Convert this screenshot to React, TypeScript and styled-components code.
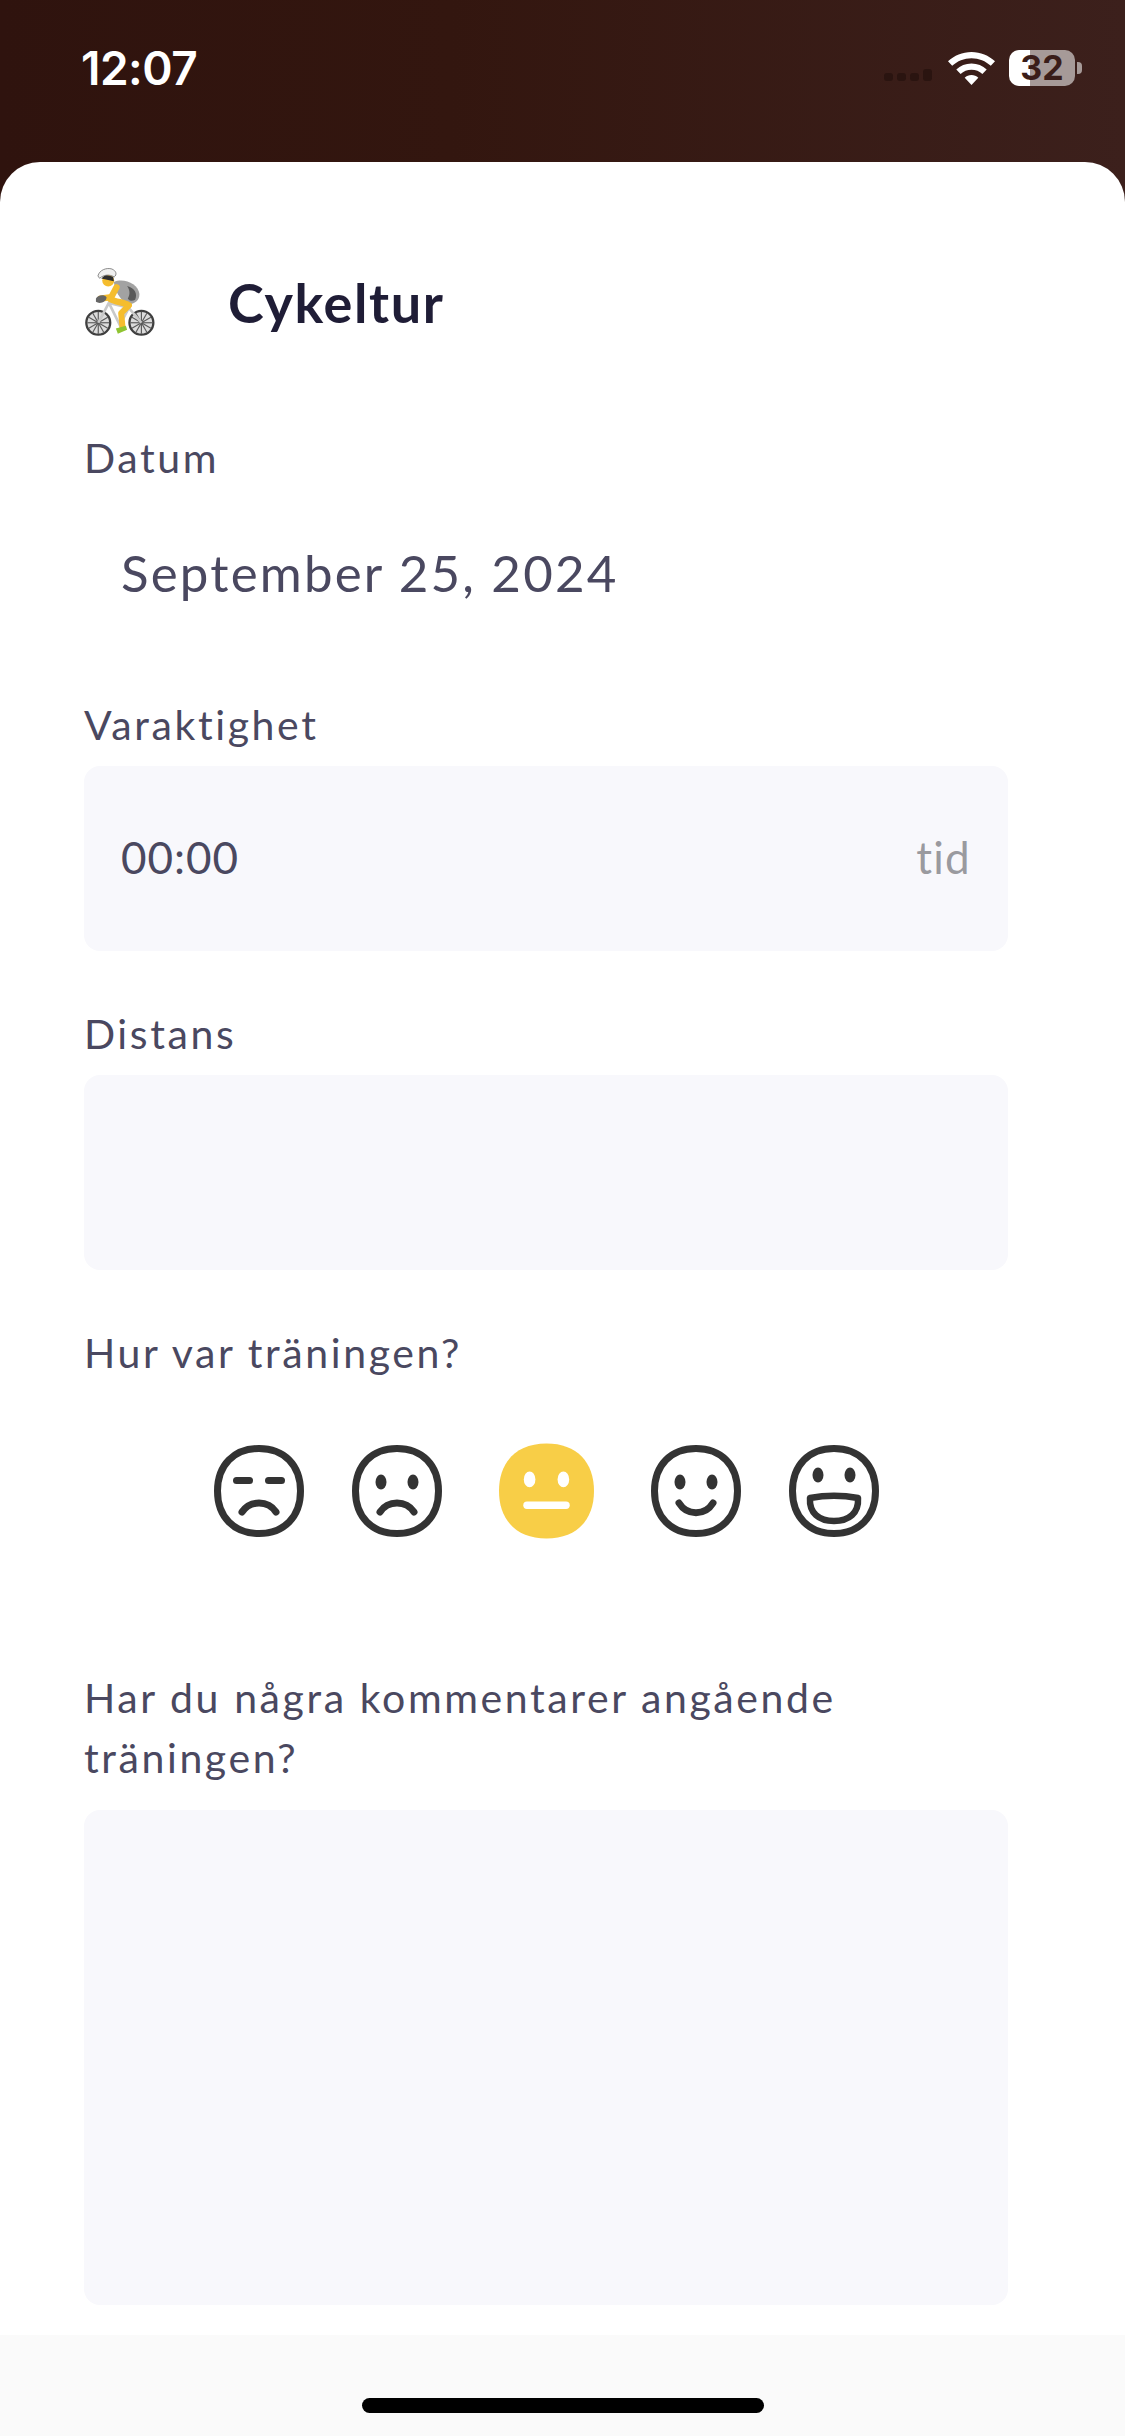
import React from "react";
import styled, { createGlobalStyle } from "styled-components";

const GlobalStyle = createGlobalStyle`
  html, body {
    margin: 0;
    padding: 0;
    background: #ffffff;
  }
`;

type Mood = "tired" | "sad" | "neutral" | "happy" | "great";

const moods: Mood[] = ["tired", "sad", "neutral", "happy", "great"];

const FacePath = "M45 3.5C70 3.5 86.5 20 86.5 46C86.5 72 70 88.5 45 88.5C20 88.5 3.5 72 3.5 46C3.5 20 20 3.5 45 3.5Z";

const MoodFace: React.FC<{ mood: Mood }> = ({ mood }) => {
  if (mood === "neutral") {
    return (
      <FaceSvg viewBox="0 0 90 90" $selected>
        <path d="M45 0C74 0 90 18 90 45C90 72 74 90 45 90C16 90 0 72 0 45C0 18 16 0 45 0Z" fill="#f8ce47" />
        <ellipse cx="29" cy="34" rx="5.5" ry="7.5" fill="#fff" />
        <ellipse cx="61" cy="34" rx="5.5" ry="7.5" fill="#fff" />
        <rect x="23" y="55" width="44" height="7" rx="3.5" fill="#fff" />
      </FaceSvg>
    );
  }
  return (
    <FaceSvg viewBox="0 0 90 92">
      <path d={FacePath} fill="none" stroke="#333" strokeWidth="7" />
      {mood === "tired" && (
        <>
          <rect x="19" y="32" width="20" height="7" rx="3.5" fill="#333" />
          <rect x="51" y="32" width="20" height="7" rx="3.5" fill="#333" />
        </>
      )}
      {(mood === "sad" || mood === "happy") && (
        <>
          <ellipse cx="29" cy="37" rx="5.5" ry="7.5" fill="#333" />
          <ellipse cx="61" cy="37" rx="5.5" ry="7.5" fill="#333" />
        </>
      )}
      {mood === "great" && (
        <>
          <ellipse cx="29" cy="30" rx="5.5" ry="7.5" fill="#333" />
          <ellipse cx="61" cy="30" rx="5.5" ry="7.5" fill="#333" />
          <path d="M21 53C37 50 53 50 69 53C70 68 60 76 45 76C30 76 20 68 21 53Z" fill="none" stroke="#333" strokeWidth="6.5" strokeLinejoin="round" />
        </>
      )}
      {(mood === "tired" || mood === "sad") && (
        <path d="M28 67C36 55 54 55 62 67" fill="none" stroke="#333" strokeWidth="7" strokeLinecap="round" />
      )}
      {mood === "happy" && (
        <path d="M28 58C36 71 54 71 62 58" fill="none" stroke="#333" strokeWidth="7" strokeLinecap="round" />
      )}
    </FaceSvg>
  );
};

const CyclistIcon = () => (
  <Cyclist viewBox="70 80 220 220">
    {[113, 243].map((cx) => (
      <g key={cx}>
        <circle cx={cx} cy="245" r="36" fill="#dcdcdc" stroke="#3f3f3f" strokeWidth="7" />
        {[0, 30, 60, 90, 120, 150].map((a) => (
          <line
            key={a}
            x1={cx - 33 * Math.cos((a * Math.PI) / 180)}
            y1={245 - 33 * Math.sin((a * Math.PI) / 180)}
            x2={cx + 33 * Math.cos((a * Math.PI) / 180)}
            y2={245 + 33 * Math.sin((a * Math.PI) / 180)}
            stroke="#5a5a5a"
            strokeWidth="3.5"
          />
        ))}
      </g>
    ))}
    <path d="M113 245L145 185L205 200L243 245M145 185L178 252L205 200" fill="none" stroke="#c9c9c9" strokeWidth="8" />
    <path d="M160 122C190 108 234 128 237 158C238 182 215 192 195 187C178 170 163 150 160 122Z" fill="#a2a2a2" />
    <path d="M200 134C224 140 232 158 224 176C214 182 206 178 202 172C210 158 208 146 200 134Z" fill="#5a5a5a" />
    <path d="M168 138L152 168L120 172" fill="none" stroke="#f5bd2e" strokeWidth="19" strokeLinecap="round" strokeLinejoin="round" />
    <path d="M150 174C165 182 190 184 205 192" fill="none" stroke="#f5bd2e" strokeWidth="19" strokeLinecap="round" />
    <path d="M204 194L182 216L186 258" fill="none" stroke="#f5bd2e" strokeWidth="18" strokeLinecap="round" strokeLinejoin="round" />
    <path d="M166 262L196 254L200 266L172 278Z" fill="#8fc431" />
    <path d="M106 172C110 162 130 158 138 168C138 182 118 190 106 182Z" fill="#666" />
    <circle cx="143" cy="118" r="18" fill="#f5bd2e" />
    <path d="M122 112L160 120L158 106L135 100Z" fill="#2e2e2e" />
    <path d="M112 104C116 86 138 78 154 83C168 89 170 100 161 107C146 98 130 100 117 111Z" fill="#f0f0f0" stroke="#777" strokeWidth="2.5" />
  </Cyclist>
);

const WifiIcon = () => (
  <Wifi viewBox="0 0 47 33">
    <path d="M23.5 0C32.5 0 40.8 3.5 47 9.3L42.8 13.8C37.7 9 30.9 6.2 23.5 6.2C16.1 6.2 9.3 9 4.2 13.8L0 9.3C6.2 3.5 14.5 0 23.5 0Z" fill="#fff" />
    <path d="M23.5 11.5C29.4 11.5 34.7 13.8 38.7 17.4L34.4 21.9C31.5 19.4 27.7 17.8 23.5 17.8C19.3 17.8 15.5 19.4 12.6 21.9L8.3 17.4C12.3 13.8 17.6 11.5 23.5 11.5Z" fill="#fff" />
    <path d="M23.5 23C26.1 23 28.5 24 30.3 25.7L23.5 33L16.7 25.7C18.5 24 20.9 23 23.5 23Z" fill="#fff" />
  </Wifi>
);

export default function App() {
  return (
    <>
      <GlobalStyle />
      <Page>
        <StatusBar>
          <Clock>12:07</Clock>
          <StatusIcons>
            <SignalDots>
              <SignalDot />
              <SignalDot />
              <SignalDot />
              <SignalDot $tall />
            </SignalDots>
            <WifiIcon />
            <Battery>32</Battery>
            <BatteryTip />
          </StatusIcons>
        </StatusBar>
        <Sheet>
          <TitleRow>
            <CyclistIcon />
            <Title>Cykeltur</Title>
          </TitleRow>

          <Label>Datum</Label>
          <DateRow>September 25, 2024</DateRow>

          <Label $top={39}>Varaktighet</Label>
          <InputBox $height={185}>
            <InputText>00:00</InputText>
            <Unit>tid</Unit>
          </InputBox>

          <Label $top={55}>Distans</Label>
          <InputBox $height={195} />

          <Label $top={55}>Hur var träningen?</Label>
          <MoodRow>
            {moods.map((mood) => (
              <MoodFace key={mood} mood={mood} />
            ))}
          </MoodRow>

          <CommentLabel>
            Har du några kommentarer angående
            <br />
            träningen?
          </CommentLabel>
          <CommentBox />
        </Sheet>
        <Footer>
          <HomeBar />
        </Footer>
      </Page>
    </>
  );
}

const Page = styled.div`
  width: 1125px;
  height: 2436px;
  display: flex;
  flex-direction: column;
  overflow: hidden;
  background: linear-gradient(90deg, #2f130e 0%, #33160f 40%, #3c201c 100%);
  font-family: "Lato", "Noto Sans", sans-serif;
`;

const StatusBar = styled.div`
  height: 162px;
  flex-shrink: 0;
  box-sizing: border-box;
  padding: 42px 43px 0 81px;
  display: flex;
  justify-content: space-between;
  align-items: flex-start;
`;

const Clock = styled.div`
  font-family: "Inter", "Liberation Sans", sans-serif;
  font-size: 46px;
  font-weight: 600;
  line-height: 52px;
  color: #ffffff;
  letter-spacing: -0.5px;
`;

const StatusIcons = styled.div`
  display: flex;
  align-items: center;
  height: 52px;
`;

const SignalDots = styled.div`
  display: flex;
  align-items: flex-end;
  gap: 4px;
  margin-right: 16px;
  padding-top: 14px;
`;

const SignalDot = styled.div<{ $tall?: boolean }>`
  width: 9px;
  height: ${(p) => (p.$tall ? 12 : 8)}px;
  border-radius: 3px;
  background: #2a1410;
`;

const Wifi = styled.svg`
  width: 47px;
  height: 33px;
  margin-right: 14px;
`;

const Battery = styled.div`
  width: 66px;
  height: 36px;
  border-radius: 10px;
  background: linear-gradient(90deg, #ffffff 32%, #a69a98 32%);
  color: #3a1d19;
  font-family: "Inter", "Liberation Sans", sans-serif;
  font-size: 34px;
  font-weight: 700;
  line-height: 36px;
  text-align: center;
`;

const BatteryTip = styled.div`
  width: 5px;
  height: 12px;
  margin-left: 2px;
  border-radius: 0 4px 4px 0;
  background: #a69a98;
`;

const Sheet = styled.div`
  flex: 1;
  box-sizing: border-box;
  padding: 106px 117px 0 84px;
  background: #ffffff;
  border-radius: 40px 40px 0 0;
`;

const TitleRow = styled.div`
  display: flex;
  align-items: center;
  gap: 71px;
  height: 73px;
  margin-bottom: 89px;
`;

const Cyclist = styled.svg`
  width: 73px;
  height: 73px;
  flex-shrink: 0;
`;

const Title = styled.div`
  padding-bottom: 5px;
  font-size: 54px;
  font-weight: 700;
  color: #1f1d36;
  letter-spacing: 1.6px;
`;

const Label = styled.div<{ $top?: number }>`
  margin-top: ${(p) => p.$top ?? 0}px;
  font-size: 41px;
  line-height: 56px;
  padding-bottom: 4px;
  color: #4a4860;
  letter-spacing: 2.6px;
`;

const CommentLabel = styled.div`
  margin-top: 131px;
  font-size: 41px;
  line-height: 60px;
  color: #4a4860;
  letter-spacing: 2.6px;
`;

const DateRow = styled.div`
  height: 168px;
  box-sizing: border-box;
  padding: 0 0 4px 37px;
  display: flex;
  align-items: center;
  font-size: 51px;
  color: #4a4860;
  letter-spacing: 2.2px;
`;

const InputBox = styled.div<{ $height: number }>`
  height: ${(p) => p.$height}px;
  margin-top: 9px;
  box-sizing: border-box;
  padding: 0 37px 4px;
  display: flex;
  align-items: center;
  justify-content: space-between;
  background: #f8f8fc;
  border-radius: 16px;
`;

const InputText = styled.span`
  font-size: 44px;
  color: #4a4860;
  letter-spacing: 1px;
`;

const Unit = styled.span`
  font-size: 44px;
  color: #9a9a9f;
  letter-spacing: 1.3px;
`;

const MoodRow = styled.div`
  display: flex;
  justify-content: center;
  align-items: center;
  gap: 48px;
  height: 92px;
  margin-top: 60px;
`;

const FaceSvg = styled.svg<{ $selected?: boolean }>`
  width: ${(p) => (p.$selected ? 95 : 90)}px;
  height: ${(p) => (p.$selected ? 96 : 92)}px;
  margin: 0 ${(p) => (p.$selected ? 9 : 0)}px;
`;

const CommentBox = styled.div`
  height: 495px;
  margin-top: 22px;
  background: #f8f8fc;
  border-radius: 16px;
`;

const Footer = styled.div`
  height: 101px;
  flex-shrink: 0;
  display: flex;
  justify-content: center;
  padding-top: 63px;
  box-sizing: border-box;
  background: #fafafa;
`;

const HomeBar = styled.div`
  width: 402px;
  height: 15px;
  border-radius: 8px;
  background: #000000;
`;
